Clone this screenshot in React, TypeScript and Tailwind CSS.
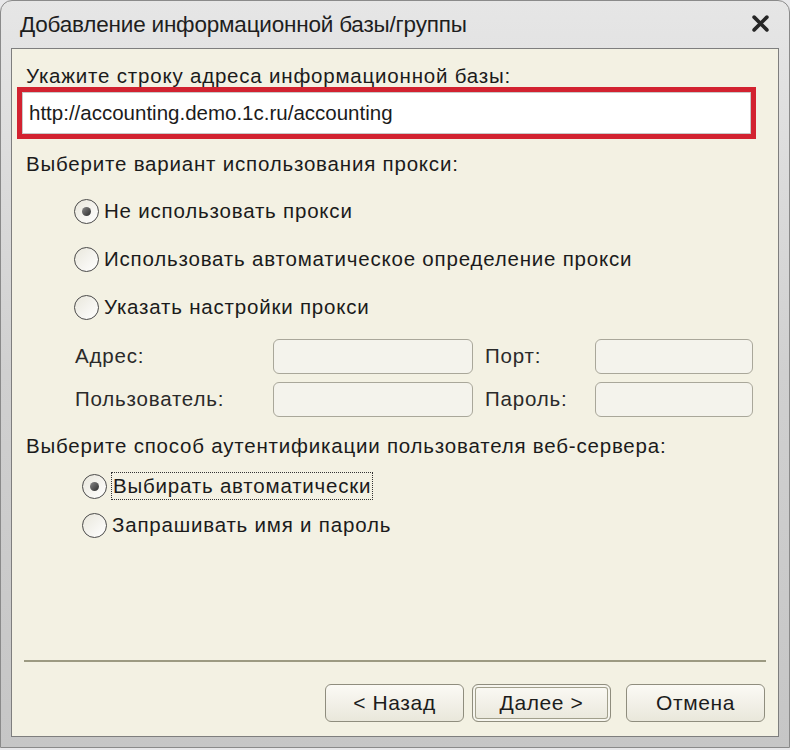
import React from "react";

const font = { fontFamily: '"Liberation Sans", Arial, sans-serif' };

const Radio: React.FC<{ checked?: boolean }> = ({ checked }) => (
  <span className="flex h-[25px] w-[25px] shrink-0 items-center justify-center rounded-full border-[1.5px] border-[#4a4a4a] bg-gradient-to-br from-[#e9e7dc] to-[#ffffff]">
    {checked && (
      <span className="h-[9px] w-[9px] rounded-full bg-gradient-to-br from-[#8a8a8a] to-[#2e2e2e]" />
    )}
  </span>
);

const Field: React.FC<{ w: string }> = ({ w }) => (
  <div
    className={`${w} h-[35px] rounded-[6px] border border-[#a9a79a] bg-[#f4f3ec]`}
  />
);

const Button: React.FC<{ label: string; primary?: boolean }> = ({
  label,
  primary,
}) => (
  <button
    type="button"
    className={`flex h-[38px] w-[139px] items-center justify-center rounded-[6px] border border-[#8f8d7e] bg-gradient-to-b from-[#fbfaf5] to-[#e9e7db] text-[21px] tracking-[0.6px] text-[#1c1c1c] ${
      primary ? "shadow-[inset_0_0_0_2px_#f6f5ee,inset_0_0_0_3px_#a19f8c]" : ""
    }`}
  >
    {label}
  </button>
);

export default function App() {
  return (
    <div className="h-[750px] w-[790px] bg-[#e8e8ea]" style={font}>
      <div className="flex h-[748px] flex-col rounded-t-[12px] border border-[#8a8a8a] bg-gradient-to-b from-[#e6e6e6] via-[#d0d0d0] to-[#c6c6c6] px-[10px] pb-[10px]">
        {/* title bar */}
        <div className="flex h-[47px] shrink-0 items-center justify-between pl-[9px] pr-[10px]">
          <span className="text-[22.5px] tracking-[-0.2px] text-[#1e1e1e]">
            Добавление информационной базы/группы
          </span>
          <svg width="17" height="17" viewBox="0 0 16 16" className="mt-[-2px]">
            <path
              d="M2 2 L14 14 M14 2 L2 14"
              stroke="#262626"
              strokeWidth="3.4"
              strokeLinecap="round"
            />
          </svg>
        </div>

        {/* content */}
        <div className="flex flex-1 flex-col border border-[#7e7e7e] bg-[#f3f1e3] text-[20.5px] tracking-[0.8px] text-[#1b1b1b]">
          <div className="pl-[14px] pt-[15px] leading-[24px]">
            Укажите строку адреса информационной базы:
          </div>
          <div className="ml-[5px] mr-[22px] mt-[-1px] h-[52px] border-[5px] border-[#d22230] bg-white">
            <div className="flex h-full items-center border border-[#c9c9c9] pl-[6px] tracking-normal">
              http://accounting.demo.1c.ru/accounting
            </div>
          </div>

          <div className="mt-[13px] pl-[14px] leading-[24px]">
            Выберите вариант использования прокси:
          </div>

          <div className="mt-[23px] flex flex-col gap-[23px] pl-[62px]">
            <label className="flex h-[25px] items-center gap-[5px]">
              <Radio checked />
              <span>Не использовать прокси</span>
            </label>
            <label className="flex h-[25px] items-center gap-[5px]">
              <Radio />
              <span>Использовать автоматическое определение прокси</span>
            </label>
            <label className="flex h-[25px] items-center gap-[5px]">
              <Radio />
              <span>Указать настройки прокси</span>
            </label>
          </div>

          <div className="mt-[19px] grid grid-cols-[198px_200px_122px_158px] items-center gap-y-[8px] pl-[63px] text-[#2a2a2a]">
            <span>Адрес:</span>
            <Field w="w-[200px]" />
            <span className="pl-[12px]">Порт:</span>
            <Field w="w-[158px]" />
            <span>Пользователь:</span>
            <Field w="w-[200px]" />
            <span className="pl-[12px]">Пароль:</span>
            <Field w="w-[158px]" />
          </div>

          <div className="mt-[17px] pl-[14px] leading-[24px]">
            Выберите способ аутентификации пользователя веб-сервера:
          </div>

          <div className="mt-[14px] flex flex-col gap-[11px] pl-[70px]">
            <label className="flex h-[28px] items-center gap-[4px]">
              <Radio checked />
              <span className="flex h-[28px] items-center border border-dotted border-[#333] px-[1px]">
                Выбирать автоматически
              </span>
            </label>
            <label className="flex h-[28px] items-center gap-[5px]">
              <Radio />
              <span>Запрашивать имя и пароль</span>
            </label>
          </div>

          <div className="mt-auto mx-[12px] h-[2px] bg-[#9c9a82]" />
          <div className="flex justify-end pb-[14px] pr-[13px] pt-[22px]">
            <Button label="< Назад" />
            <div className="w-[8px]" />
            <Button label="Далее >" primary />
            <div className="w-[15px]" />
            <Button label="Отмена" />
          </div>
        </div>
      </div>
    </div>
  );
}
